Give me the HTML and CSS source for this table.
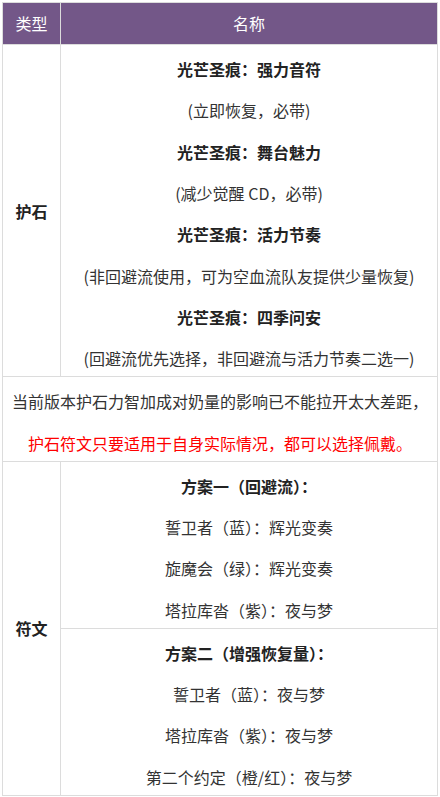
FILE: index.html
```html
<!DOCTYPE html>
<html lang="zh-CN">
<head>
<meta charset="utf-8">
<title>护石与符文</title>
<link rel="stylesheet" href="styles.css">
</head>
<body>
<table class="tbl">
  <thead>
    <tr>
      <th class="col-type">类型</th>
      <th>名称</th>
    </tr>
  </thead>
  <tbody>
    <tr>
      <td class="cat">护石</td>
      <td class="cell">
        <p class="b">光芒圣痕：强力音符</p>
        <p>(立即恢复，必带)</p>
        <p class="b">光芒圣痕：舞台魅力</p>
        <p>(减少觉醒 CD，必带)</p>
        <p class="b">光芒圣痕：活力节奏</p>
        <p>(非回避流使用，可为空血流队友提供少量恢复)</p>
        <p class="b">光芒圣痕：四季问安</p>
        <p>(回避流优先选择，非回避流与活力节奏二选一)</p>
      </td>
    </tr>
    <tr>
      <td class="cell" colspan="2">
        <p>当前版本护石力智加成对奶量的影响已不能拉开太大差距，</p>
        <p class="red">护石符文只要适用于自身实际情况，都可以选择佩戴。</p>
      </td>
    </tr>
    <tr>
      <td class="cat" rowspan="2">符文</td>
      <td class="cell">
        <p class="b">方案一（回避流）：</p>
        <p>誓卫者（蓝）：辉光变奏</p>
        <p>旋魔会（绿）：辉光变奏</p>
        <p>塔拉库沓（紫）：夜与梦</p>
      </td>
    </tr>
    <tr>
      <td class="cell">
        <p class="b">方案二（增强恢复量）：</p>
        <p>誓卫者（蓝）：夜与梦</p>
        <p>塔拉库沓（紫）：夜与梦</p>
        <p>第二个约定（橙/红）：夜与梦</p>
      </td>
    </tr>
  </tbody>
</table>
</body>
</html>
```

FILE: styles.css
```css
html, body {
  margin: 0;
  padding: 0;
  background: #ffffff;
}

body {
  padding: 2px;
  font-family: "Noto Sans CJK SC", "Noto Sans", sans-serif;
  font-size: 16px;
  color: #333333;
}

.tbl {
  width: 100%;
  border-collapse: collapse;
  table-layout: fixed;
}

.tbl th,
.tbl td {
  border: 1px solid #dcdcdc;
  text-align: center;
}

.tbl th {
  background: #735788;
  color: #ffffff;
  font-weight: normal;
  line-height: 24px;
  padding: 8px 4px 9px;
}

.tbl th.col-type {
  width: 57px;
  padding-left: 0;
  padding-right: 0;
}

.cat {
  font-weight: bold;
  color: #222222;
  vertical-align: middle;
  padding: 0;
}

.cell {
  padding: 12px 4px 6px;
  vertical-align: top;
}

.cell p {
  margin: 0;
  line-height: 24px;
  white-space: nowrap;
}

.cell p + p {
  margin-top: 17.35px;
}

.b {
  font-weight: bold;
  color: #222222;
}

.red {
  color: #ff0000;
}
```
